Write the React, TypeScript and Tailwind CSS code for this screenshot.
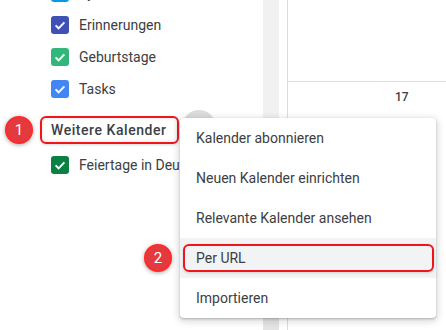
import React from "react";

type Cal = { name: string; color: string };

// calendar rows in the sidebar
const calendars: Cal[] = [
  { name: "Symbole", color: "#039be5" },
  { name: "Erinnerungen", color: "#3f51b5" },
  { name: "Geburtstage", color: "#33b679" },
  { name: "Tasks", color: "#4285f4" },
];

const menuItems = [
  "Kalender abonnieren",
  "Neuen Kalender einrichten",
  "Relevante Kalender ansehen",
  "Per URL",
  "Importieren",
];

const Check: React.FC<{ color: string }> = ({ color }) => (
  <span
    className="flex h-[18px] w-[18px] shrink-0 items-center justify-center rounded-[3px]"
    style={{ backgroundColor: color }}
  >
    <svg width="18" height="18" viewBox="0 0 18 18" fill="none">
      <path d="M4.6 9.4 7.6 12.3 13.4 6.4" stroke="#fff" strokeWidth="1.9" />
    </svg>
  </span>
);

const Row: React.FC<{ cal: Cal }> = ({ cal }) => (
  <div className="flex h-8 items-center gap-[10px] pl-[51px]">
    <Check color={cal.color} />
    <span className="whitespace-nowrap text-[14px] text-[#3c4043]">{cal.name}</span>
  </div>
);

const Badge: React.FC<{ n: number; className: string }> = ({ n, className }) => (
  <div
    className={
      "absolute flex h-[28px] w-[28px] items-center justify-center rounded-full border-2 border-[#ff2a2a] bg-[#e23a3e] text-[15px] text-white shadow-[0_1px_4px_rgba(0,0,0,0.35)] " +
      className
    }
  >
    {n}
  </div>
);

export default function App() {
  return (
    <div className="relative flex h-[330px] w-[446px] overflow-hidden bg-white font-['Roboto',sans-serif]">
      {/* Sidebar */}
      <div className="w-[263px] shrink-0">
        <div className="-mt-[23px]">
          {calendars.map((c) => (
            <Row key={c.name} cal={c} />
          ))}
        </div>
        <div className="mt-[11px] ml-[40px] flex h-[28px] w-[139px] items-center rounded-[6px] border-2 border-[#f0141b] pl-[9px] shadow-[0_1px_3px_rgba(0,0,0,0.15),inset_0_0_4px_rgba(0,0,0,0.12)]">
          <span className="whitespace-nowrap text-[14px] font-medium tracking-[0.55px] text-[#3c4043]">
            Weitere Kalender
          </span>
        </div>
        <div className="mt-[5px]">
          <Row cal={{ name: "Feiertage in Deutschland", color: "#0b8043" }} />
        </div>
      </div>

      {/* Scrollbar */}
      <div className="flex w-[16px] shrink-0 flex-col bg-[#f1f1f1]">
        <div className="mt-[240px] flex-1 bg-[#e4e4e4]" />
      </div>
      <div className="w-[8px] shrink-0" />

      {/* Calendar grid */}
      <div className="flex-1 border-l border-[#dadce0]">
        <div className="h-[82px] border-b border-[#dadce0]" />
        <div className="mt-[7px] pl-[107px] text-[12px] font-medium leading-4 text-[#3c4043]">17</div>
      </div>

      {/* Hover circle of the add button */}
      <div className="absolute left-[182px] top-[110px] h-[34px] w-[34px] rounded-full bg-[#dcdcdc]" />

      {/* Dropdown menu */}
      <div className="absolute left-[180px] top-[118px] w-[256px] rounded-[4px] bg-white shadow-[0_2px_6px_2px_rgba(60,64,67,0.18),0_1px_2px_rgba(60,64,67,0.3)]">
        {menuItems.map((item) => (
          <div
            key={item}
            className={
              "relative flex h-10 items-center pl-4 text-[14px] text-[#3c4043] " +
              (item === "Per URL" ? "bg-[#f1f3f4]" : "")
            }
          >
            {item === "Per URL" && (
              <div className="absolute bottom-[6px] left-[3px] right-[2px] top-[6px] rounded-[6px] border-2 border-[#f0141b] shadow-[0_1px_3px_rgba(0,0,0,0.15)]" />
            )}
            <span className="relative whitespace-nowrap">{item}</span>
          </div>
        ))}
      </div>

      <Badge n={1} className="left-[5px] top-[116px]" />
      <Badge n={2} className="left-[144px] top-[244px]" />
    </div>
  );
}
